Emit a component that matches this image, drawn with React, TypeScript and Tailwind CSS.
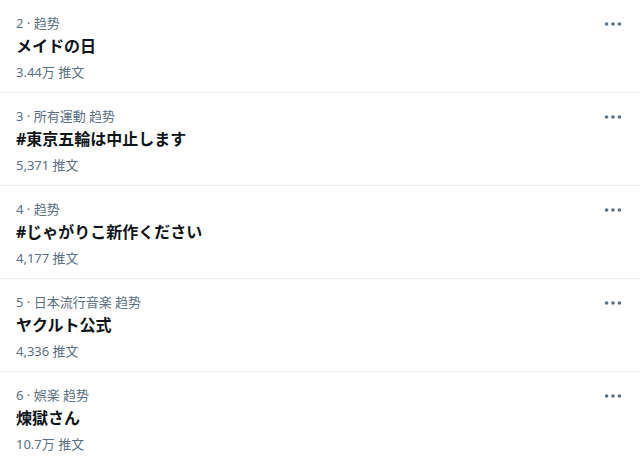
const trends = [
  { rank: 2, category: "趋势", title: "メイドの日", count: "3.44万" },
  { rank: 3, category: "所有運動 趋势", title: "#東京五輪は中止します", count: "5,371" },
  { rank: 4, category: "趋势", title: "#じゃがりこ新作ください", count: "4,177" },
  { rank: 5, category: "日本流行音楽 趋势", title: "ヤクルト公式", count: "4,336" },
  { rank: 6, category: "娯楽 趋势", title: "煉獄さん", count: "10.7万" },
];

const MoreIcon = () => (
  <svg viewBox="0 0 24 24" className="h-[22px] w-[22px] fill-[#5b7083]">
    <circle cx="5" cy="12" r="2" />
    <circle cx="12" cy="12" r="2" />
    <circle cx="19" cy="12" r="2" />
  </svg>
);

const TrendRow = ({ trend }: { trend: (typeof trends)[number] }) => {
  return (
    <div className="flex h-[93px] border-b border-[#ebeef0] pl-4 pr-4 pt-[13px]">
      <div className="flex flex-1 flex-col">
        <p className="text-[13px] leading-[20px] text-[#5b7083]">
          {trend.rank} · {trend.category}
        </p>
        <p className="mt-px text-[16px] font-bold leading-[24px] text-[#0f1419]">
          {trend.title}
        </p>
        <p className="mt-1 text-[13px] leading-[20px] text-[#5b7083]">
          {trend.count} 推文
        </p>
      </div>
      <div>
        <MoreIcon />
      </div>
    </div>
  );
};

export default function App() {
  return (
    <div
      className="h-[460px] w-[640px] overflow-hidden bg-white"
      style={{ fontFamily: '"Noto Sans", "Noto Sans CJK JP", sans-serif' }}
    >
      {trends.map((t) => (
        <TrendRow key={t.rank} trend={t} />
      ))}
    </div>
  );
}
